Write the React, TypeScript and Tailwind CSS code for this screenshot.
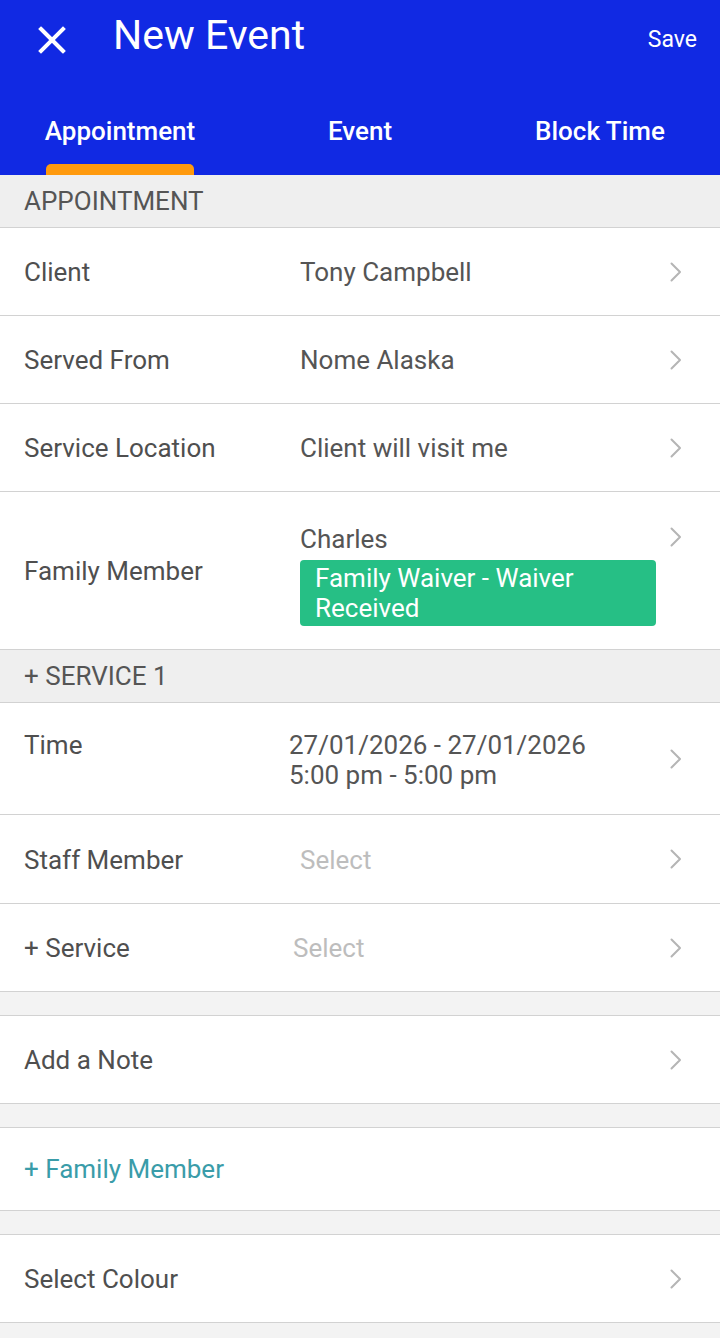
const font = { fontFamily: 'Roboto, "Noto Sans", sans-serif' };

const rowClass = 'flex w-full border-b border-[#d2d2d2] bg-white pl-6';
const labelClass = 'text-[26px] leading-[30px] text-[#4f4f4f]';
const valueClass = 'text-[26px] leading-[30px] text-[#555]';
const sectionClass =
  'flex h-[53px] items-center border-b border-[#d2d2d2] bg-[#efefef] pl-6 text-[26px] text-[#555]';
const spacerClass = 'h-[24px] border-b border-[#d2d2d2] bg-[#f3f3f3]';

function Chevron() {
  return (
    <svg width="12" height="20" viewBox="0 0 12 20" fill="none">
      <path d="M1.5 1.5 L10 10 L1.5 18.5" stroke="#b5b5b5" strokeWidth="2" strokeLinecap="round" strokeLinejoin="round" />
    </svg>
  );
}

function Row({
  label,
  value,
  placeholder,
  labelWidth = 'w-[276px]',
}: {
  label: string;
  value?: string;
  placeholder?: string;
  labelWidth?: string;
}) {
  return (
    <div className={`${rowClass} h-[88px] items-center`}>
      <div className={`${labelClass} ${labelWidth} shrink-0 pt-[1px]`}>{label}</div>
      <div className="flex-1 pt-[1px]">
        {value && <div className={valueClass}>{value}</div>}
        {placeholder && <div className="text-[26px] leading-[30px] text-[#bdbdbd]">{placeholder}</div>}
      </div>
      <div className="flex w-[64px] shrink-0 pl-[14px]">
        <Chevron />
      </div>
    </div>
  );
}

export default function App() {
  return (
    <div className="min-h-screen w-full bg-[#f3f3f3]" style={font}>
      {/* header */}
      <div className="flex h-[175px] flex-col bg-[#1129e3] text-white">
        <div className="flex h-[80px] items-center">
          <div className="ml-[38px] flex h-[28px] w-[28px] items-center justify-center">
            <svg width="28" height="28" viewBox="0 0 28 28">
              <path d="M3 3 L25 25 M25 3 L3 25" stroke="white" strokeWidth="4" strokeLinecap="square" />
            </svg>
          </div>
          <div className="ml-[47px] mt-[-10px] text-[41px] leading-none">New Event</div>
          <div className="ml-auto mr-[23px] text-[23px]">Save</div>
        </div>
        <div className="grid h-[95px] grid-cols-3">
          {['Appointment', 'Event', 'Block Time'].map((t, i) => (
            <div key={t} className="relative flex flex-col items-center">
              <div className="mt-[36px] text-[26px] font-medium leading-[30px]">{t}</div>
              {i === 0 && (
                <div className="absolute bottom-0 left-[46px] h-[11px] w-[148px] rounded-t-[5px] bg-[#ff9a0e]" />
              )}
            </div>
          ))}
        </div>
      </div>

      <div className={sectionClass}>APPOINTMENT</div>
      <Row label="Client" value="Tony Campbell" />
      <Row label="Served From" value="Nome Alaska" />
      <Row label="Service Location" value="Client will visit me" />

      <div className={`${rowClass} h-[158px] items-center`}>
        <div className={`${labelClass} w-[276px] shrink-0`}>Family Member</div>
        <div className="mt-[8px] flex-1">
          <div className={valueClass}>Charles</div>
          <div className="mt-[6px] rounded-[4px] bg-[#26bf85] px-[15px] py-[3px] text-[26px] leading-[30px] text-white">
            Family Waiver - Waiver Received
          </div>
        </div>
        <div className="flex w-[64px] shrink-0 self-start pl-[14px] pt-[35px]">
          <Chevron />
        </div>
      </div>

      <div className={sectionClass}>+ SERVICE 1</div>

      <div className={`${rowClass} h-[112px] items-center`}>
        <div className="flex flex-1 items-start pt-[3px]">
          <div className={`${labelClass} w-[265px] shrink-0`}>Time</div>
          <div className={valueClass}>
            <div>27/01/2026 - 27/01/2026</div>
            <div>5:00 pm - 5:00 pm</div>
          </div>
        </div>
        <div className="flex w-[64px] shrink-0 pl-[14px]">
          <Chevron />
        </div>
      </div>

      <div className="[&>div]:h-[89px]">
        <Row label="Staff Member" placeholder="Select" />
      </div>
      <Row label="+ Service" placeholder="Select" labelWidth="w-[269px]" />

      <div className={spacerClass} />
      <Row label="Add a Note" />
      <div className={spacerClass} />

      <div className={`${rowClass} h-[83px] items-center`}>
        <div className="text-[26px] leading-[30px] text-[#3a9ca9]">+ Family Member</div>
      </div>

      <div className={spacerClass} />
      <Row label="Select Colour" />
    </div>
  );
}
